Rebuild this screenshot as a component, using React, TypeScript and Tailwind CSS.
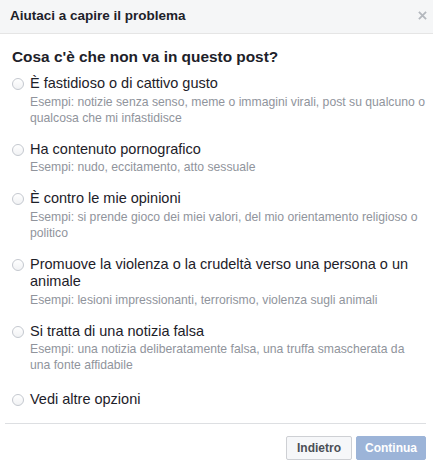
import React from 'react';

type Option = { label: string; desc?: string };

const options: Option[] = [
  {
    label: 'È fastidioso o di cattivo gusto',
    desc: 'Esempi: notizie senza senso, meme o immagini virali, post su qualcuno o qualcosa che mi infastidisce',
  },
  { label: 'Ha contenuto pornografico', desc: 'Esempi: nudo, eccitamento, atto sessuale' },
  {
    label: 'È contro le mie opinioni',
    desc: 'Esempi: si prende gioco dei miei valori, del mio orientamento religioso o politico',
  },
  {
    label: 'Promuove la violenza o la crudeltà verso una persona o un animale',
    desc: 'Esempi: lesioni impressionanti, terrorismo, violenza sugli animali',
  },
  {
    label: 'Si tratta di una notizia falsa',
    desc: 'Esempi: una notizia deliberatamente falsa, una truffa smascherata da una fonte affidabile',
  },
  { label: 'Vedi altre opzioni' },
];

function Radio() {
  return (
    <span className="mt-[3px] h-[12px] w-[12px] shrink-0 rounded-full border border-[#c4c8cf] bg-gradient-to-b from-[#ffffff] to-[#f1f2f4]" />
  );
}

export default function App() {
  return (
    <div
      className="h-[469px] w-[433px] bg-white text-[#1d2129]"
      style={{ fontFamily: '"Liberation Sans", Arial, sans-serif' }}
    >
      <div className="flex h-[34px] items-center justify-between border-b border-[#e5e5e5] bg-[#f5f6f7] pb-[2px] pl-[10px] pr-[6px]">
        <span className="text-[13.5px] font-bold leading-[18px]">Aiutaci a capire il problema</span>
        <svg width="9" height="9" viewBox="0 0 10 10">
          <path d="M1 1L9 9M9 1L1 9" stroke="#b4b8be" strokeWidth="2" />
        </svg>
      </div>

      <div className="pl-[12px] pr-[7px] pt-[13px]">
        <div className="text-[15.4px] font-bold leading-[19px]">Cosa c'è che non va in questo post?</div>
        <div className="mt-[9px] flex flex-col gap-[15px]">
          {options.map((o) => (
            <div key={o.label} className={`flex gap-[6px] ${o.desc ? '' : 'mt-[3px]'}`}>
              <Radio />
              <div>
                <div className="text-[14.5px] leading-[17.5px]">{o.label}</div>
                {o.desc && (
                  <div className="mt-[1px] text-[12.2px] leading-[16px] text-[#90949c]">{o.desc}</div>
                )}
              </div>
            </div>
          ))}
        </div>
      </div>

      <div className="ml-[5px] mr-[7px] mt-[14px] border-t border-[#dddfe2]" />

      <div className="flex justify-end gap-[4px] pr-[7px] pt-[12px]">
        <button className="h-[24px] rounded-[2px] border border-[#ced0d4] bg-[#f6f7f9] px-[10px] text-[12px] font-bold text-[#4b4f56]">
          Indietro
        </button>
        <button className="h-[24px] rounded-[2px] border border-[#9cb4d8] bg-[#9cb4d8] px-[8px] text-[12px] font-bold text-white">
          Continua
        </button>
      </div>
    </div>
  );
}
